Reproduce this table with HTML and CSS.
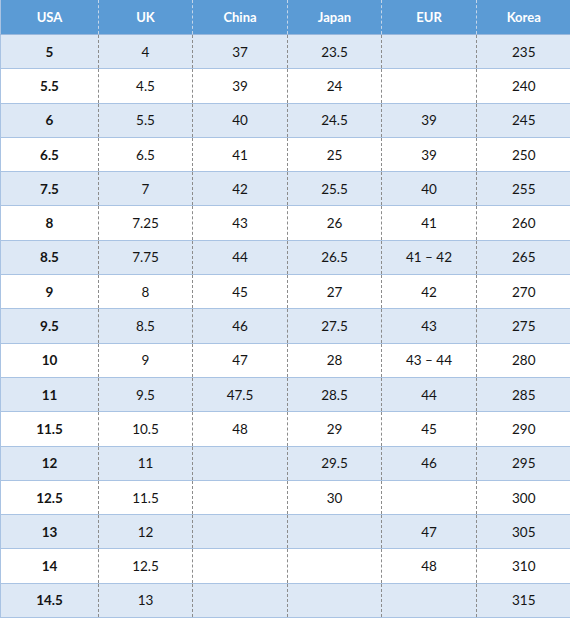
FILE: index.html
```html
<!DOCTYPE html>
<html>
<head>
<meta charset="utf-8">
<link rel="stylesheet" href="styles.css">
</head>
<body>
<table class="sizes">
<colgroup>
<col class="c1"><col class="c2"><col class="c3"><col class="c4"><col class="c5"><col class="c6">
</colgroup>
<thead>
<tr><th>USA</th><th>UK</th><th>China</th><th>Japan</th><th>EUR</th><th>Korea</th></tr>
</thead>
<tbody>
<tr><td>5</td><td>4</td><td>37</td><td>23.5</td><td></td><td>235</td></tr>
<tr><td>5.5</td><td>4.5</td><td>39</td><td>24</td><td></td><td>240</td></tr>
<tr><td>6</td><td>5.5</td><td>40</td><td>24.5</td><td>39</td><td>245</td></tr>
<tr><td>6.5</td><td>6.5</td><td>41</td><td>25</td><td>39</td><td>250</td></tr>
<tr><td>7.5</td><td>7</td><td>42</td><td>25.5</td><td>40</td><td>255</td></tr>
<tr><td>8</td><td>7.25</td><td>43</td><td>26</td><td>41</td><td>260</td></tr>
<tr><td>8.5</td><td>7.75</td><td>44</td><td>26.5</td><td>41 – 42</td><td>265</td></tr>
<tr><td>9</td><td>8</td><td>45</td><td>27</td><td>42</td><td>270</td></tr>
<tr><td>9.5</td><td>8.5</td><td>46</td><td>27.5</td><td>43</td><td>275</td></tr>
<tr><td>10</td><td>9</td><td>47</td><td>28</td><td>43 – 44</td><td>280</td></tr>
<tr><td>11</td><td>9.5</td><td>47.5</td><td>28.5</td><td>44</td><td>285</td></tr>
<tr><td>11.5</td><td>10.5</td><td>48</td><td>29</td><td>45</td><td>290</td></tr>
<tr><td>12</td><td>11</td><td></td><td>29.5</td><td>46</td><td>295</td></tr>
<tr><td>12.5</td><td>11.5</td><td></td><td>30</td><td></td><td>300</td></tr>
<tr><td>13</td><td>12</td><td></td><td></td><td>47</td><td>305</td></tr>
<tr><td>14</td><td>12.5</td><td></td><td></td><td>48</td><td>310</td></tr>
<tr><td>14.5</td><td>13</td><td></td><td></td><td></td><td>315</td></tr>
</tbody>
</table>
</body>
</html>
```
FILE: styles.css
```css
html, body {
  margin: 0;
  padding: 0;
  background: #ffffff;
}
.sizes {
  width: 570px;
  table-layout: fixed;
  border-collapse: collapse;
  font-family: Lato, "Open Sans", "Liberation Sans", sans-serif;
  font-size: 13.5px;
  color: #141414;
}
.c1 { width: 98px; }
.c2 { width: 94px; }
.c3 { width: 95px; }
.c4 { width: 94px; }
.c5 { width: 95px; }
.c6 { width: 94px; }
.sizes th {
  height: 34px;
  padding: 0;
  background: #5b9bd5;
  color: #ffffff;
  font-weight: 700;
  font-size: 13px;
  text-align: center;
  vertical-align: middle;
  border-left: 1px dashed #c4d6ea;
  border-bottom: 1px solid #9ab8dc;
}
.sizes td {
  height: 33.3px;
  padding: 0;
  text-align: center;
  vertical-align: middle;
  border-left: 1px dashed #8c8c8c;
  border-bottom: 1px solid #a9c3e3;
}
.sizes th:first-child,
.sizes td:first-child {
  border-left: 1px solid #a9c3e3;
}
.sizes td:first-child {
  font-weight: 700;
}
.sizes tbody tr:nth-child(odd) td {
  background: #dde8f5;
}
.sizes tbody tr:nth-child(even) td {
  background: #ffffff;
}
```
